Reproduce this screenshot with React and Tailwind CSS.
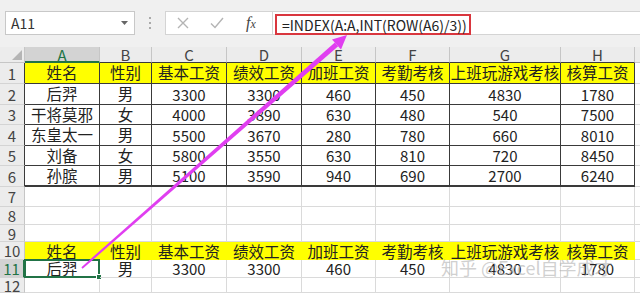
import React from 'react';

const font = { fontFamily: '"Noto Sans CJK SC", "Noto Sans", sans-serif' };

const letters = ['A', 'B', 'C', 'D', 'E', 'F', 'G', 'H'];
const head = ['姓名', '性别', '基本工资', '绩效工资', '加班工资', '考勤考核', '上班玩游戏考核', '核算工资'];
const data = [
  ['后羿', '男', '3300', '3300', '460', '450', '4830', '1780'],
  ['干将莫邪', '女', '4000', '3890', '630', '480', '540', '7500'],
  ['东皇太一', '男', '5500', '3670', '280', '780', '660', '8010'],
  ['刘备', '女', '5800', '3550', '630', '810', '720', '8450'],
  ['孙膑', '男', '5100', '3590', '940', '690', '2700', '6240'],
];
// row heights in px for rows 1..12
const heights = ['h-[21px]', 'h-[21px]', 'h-[20px]', 'h-[21px]', 'h-[20px]', 'h-[21px]', 'h-[20px]', 'h-[18px]', 'h-[17px]', 'h-[18px]', 'h-[18px]', 'h-[15px]'];

const RowHead = ({ n, h, dark, selected }) => (
  <div
    className={`${h} flex items-center justify-center text-[15px] leading-none border-b border-b-[#d4d4d4] border-r ${
      selected ? 'bg-[#d3d3d3] text-[#217346] border-r-[#217346] border-r-2' : 'bg-[#ececec] text-[#444]'
    } ${dark ? 'border-r-[#3a3a3a]' : selected ? '' : 'border-r-[#c6c6c6]'}`}
  >
    {n}
  </div>
);

const Cell = ({ h, className = '', children }) => (
  <div className={`${h} flex items-center justify-center whitespace-nowrap overflow-visible leading-none border-r border-b ${className}`}>
    {children}
  </div>
);

export default function App() {
  return (
    <div className="w-[640px] h-[293px] overflow-hidden bg-white relative text-[#222]" style={font}>
      {/* formula bar */}
      <div className="h-[47px] bg-[#f0f0f0] flex items-start pt-[11px] pl-[5px]">
        <div className="w-[130px] h-[24px] bg-white border border-[#c8c8c8] flex items-center justify-between pl-[5px] pr-[6px] text-[14px] text-[#333]">
          <span>A11</span>
          <svg width="7" height="4" viewBox="0 0 7 4"><path d="M0 0h7L3.5 4z" fill="#666" /></svg>
        </div>
        <div className="w-[30px] h-[24px] flex flex-col items-center justify-center gap-[3px]">
          <span className="w-[2px] h-[2px] bg-[#aaa]" />
          <span className="w-[2px] h-[2px] bg-[#aaa]" />
          <span className="w-[2px] h-[2px] bg-[#aaa]" />
        </div>
        <div className="w-[108px] h-[24px] bg-white border border-[#d4d4d4] flex items-center">
          <div className="w-[34px] flex justify-center">
            <svg width="12" height="12" viewBox="0 0 12 12"><path d="M1 1l10 10M11 1L1 11" stroke="#b4b4b4" strokeWidth="1.4" /></svg>
          </div>
          <div className="w-[34px] flex justify-center">
            <svg width="14" height="12" viewBox="0 0 14 12"><path d="M1 6.5l4 4L13 1" stroke="#b4b4b4" strokeWidth="1.4" fill="none" /></svg>
          </div>
          <div className="w-[34px] flex justify-center italic text-[16px] text-[#444]" style={{ fontFamily: '"Liberation Serif", serif' }}>
            f<span className="text-[12px] mt-[4px]">x</span>
          </div>
        </div>
        <div className="flex-1 h-[24px] bg-white border-y border-[#d4d4d4] pl-[2px] pt-[2px]">
          <div className="w-[196px] h-[21px] border-2 border-[#d9363e] flex items-center pl-[5px] text-[14px] text-[#222] leading-none">
            =INDEX(A:A,INT(ROW(A6)/3))
          </div>
        </div>
      </div>

      {/* sheet */}
      <div className="grid grid-cols-[25px_75px_52px_75px_75px_74px_74px_111px_74px_1fr]">
        {/* column headers */}
        <div className="h-[16px] bg-[#ececec] border-r border-b border-[#c6c6c6] flex items-end justify-end pr-[2px] pb-[2px]">
          <svg width="10" height="10" viewBox="0 0 10 10"><path d="M10 0v10H0z" fill="#b5b5b5" /></svg>
        </div>
        {letters.map((l, i) => (
          <div
            key={l}
            className={`h-[16px] flex items-center justify-center text-[15px] leading-none border-r border-r-[#c6c6c6] ${
              i === 0 ? 'bg-[#d3d3d3] text-[#217346] border-b-2 border-b-[#217346]' : 'bg-[#ececec] text-[#444] border-b border-b-[#3a3a3a]'
            }`}
          >
            {l}
          </div>
        ))}
        <div className="h-[16px] bg-[#ececec] border-b border-[#c6c6c6]" />

        {/* row 1 header names */}
        <RowHead n={1} h={heights[0]} dark />
        {head.map((t) => (
          <Cell key={t} h={heights[0]} className="bg-[#ffff00] border-[#3a3a3a] text-[15.5px]">
            {t}
          </Cell>
        ))}
        <Cell h={heights[0]} className="border-[#dadada] border-r-0" />

        {/* rows 2-6 */}
        {data.map((row, r) => (
          <React.Fragment key={r}>
            <RowHead n={r + 2} h={heights[r + 1]} dark />
            {row.map((v, c) => (
              <Cell
                key={c}
                h={heights[r + 1]}
                className={`border-[#3a3a3a] ${r === 4 ? 'border-b-2' : ''} ${c < 2 ? 'text-[15.5px]' : 'text-[15px]'}`}
              >
                {v}
              </Cell>
            ))}
            <Cell h={heights[r + 1]} className="border-[#dadada] border-r-0" />
          </React.Fragment>
        ))}

        {/* rows 7-9 empty */}
        {[7, 8, 9].map((n) => (
          <React.Fragment key={n}>
            <RowHead n={n} h={heights[n - 1]} />
            {letters.map((l) => (
              <Cell key={l} h={heights[n - 1]} className="border-[#dadada]" />
            ))}
            <Cell h={heights[n - 1]} className="border-[#dadada] border-r-0" />
          </React.Fragment>
        ))}

        {/* row 10 copied headers */}
        <RowHead n={10} h={heights[9]} />
        {head.map((t) => (
          <Cell key={t} h={heights[9]} className="bg-[#ffff00] border-[#ffff00] text-[15.5px] pt-[3px]">
            {t}
          </Cell>
        ))}
        <Cell h={heights[9]} className="border-[#dadada] border-r-0" />

        {/* row 11 result */}
        <RowHead n={11} h={heights[10]} selected />
        {data[0].map((v, c) => (
          <Cell key={c} h={heights[10]} className={`border-[#dadada] relative ${c < 2 ? 'text-[15.5px]' : 'text-[15px]'}`}>
            {v}
            {c === 0 && (
              <div className="absolute -left-[1px] -top-[1px] right-[-1px] bottom-[-1px] border-2 border-[#217346]">
                <div className="absolute -right-[4px] -bottom-[4px] w-[6px] h-[6px] bg-[#217346] border border-white" />
              </div>
            )}
          </Cell>
        ))}
        <Cell h={heights[10]} className="border-[#dadada] border-r-0" />

        {/* row 12 */}
        <RowHead n={12} h={heights[11]} />
        {letters.map((l) => (
          <Cell key={l} h={heights[11]} className="border-[#dadada]" />
        ))}
        <Cell h={heights[11]} className="border-[#dadada] border-r-0" />
      </div>

      {/* watermark */}
      <div className="absolute left-[441px] top-[258px] text-[18px] leading-none text-[#b0b0b0]/60 whitespace-nowrap pointer-events-none">
        知乎 @Excel自学成才
      </div>

      {/* arrow */}
      <svg className="absolute left-0 top-0 pointer-events-none" width="640" height="293" viewBox="0 0 640 293">
        <polygon points="82.6,268.8 81.4,267.2 334.8,42.4 338.2,46.2" fill="#e03ef0" />
        <polygon points="347,35 341,49.5 332,39.5" fill="#e03ef0" />
      </svg>
    </div>
  );
}
